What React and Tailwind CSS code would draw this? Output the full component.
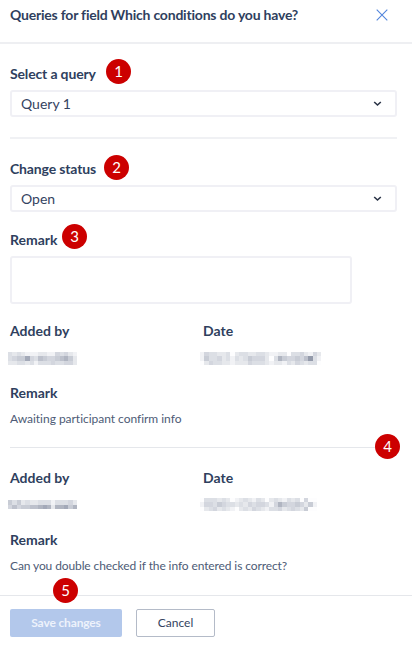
import React from "react";

// Shade levels of the redaction mosaic, 0 = white, 9 = darkest.
const NAME_ONE = ["3232111221143421", "3455843654456752", "2233231333433442"];
const DATE_ONE = [
  "1433223023322332112203342142",
  "1533423132354442037544546931",
  "0243322122243332122132432330",
];
const NAME_TWO = ["5352322333133342", "4645566787277857"];
const DATE_TWO = [
  "033323201232132023213230400",
  "144354332324344314754454251",
  "023423210232432133423432500",
];

const SHADES = ["#fdfdfe", "#f1f2f5", "#e6e8ec", "#dcdfe5", "#d3d6de", "#c8ccd5", "#bdc1cc", "#b0b5c1", "#a3a9b8", "#949bab"];

function Mosaic({ rows, className }) {
  return (
    <div className={`flex flex-col ${className}`}>
      {rows.map((row, i) => (
        <div key={i} className="flex flex-1">
          {row.split("").map((level, j) => (
            <span key={j} className="flex-1" style={{ backgroundColor: SHADES[Number(level)] }} />
          ))}
        </div>
      ))}
    </div>
  );
}

function Badge({ n, className }) {
  return (
    <span className={`absolute flex size-[25px] items-center justify-center rounded-full bg-[#cc0000] text-[15px] leading-none text-white ${className}`}>
      {n}
    </span>
  );
}

function Label({ children, className = "" }) {
  return <div className={`text-[14px] leading-5 font-bold text-[#2f3f5e] ${className}`}>{children}</div>;
}

function Select({ value }) {
  return (
    <div className="flex h-[27px] w-[387px] items-center justify-between rounded-[3px] border-2 border-[#f0f0f5] pr-[13px] pl-[9px] text-[14px] text-[#34435f]">
      <span>{value}</span>
      <svg width="9" height="6" viewBox="0 0 9 6" fill="none" stroke="#2b3447" strokeWidth="1.6">
        <path d="M1.2 1l3.3 3 3.3-3" />
      </svg>
    </div>
  );
}

function Entry({ name, nameClass, date, dateClass, remark, remarkClass }) {
  return (
    <div>
      <div className="flex h-[44px]">
        <div className="w-[193px]">
          <Label>Added by</Label>
          <Mosaic rows={name} className={nameClass} />
        </div>
        <div>
          <Label>Date</Label>
          <Mosaic rows={date} className={dateClass} />
        </div>
      </div>
      <div className="pt-[18px]"><Label>Remark</Label></div>
      <p className={`pt-[6px] text-[12px] leading-5 text-[#4d5b76] ${remarkClass}`}>{remark}</p>
    </div>
  );
}

export default function App() {
  return (
    <div className="flex h-[645px] w-[412px] flex-col overflow-hidden bg-white font-['Lato',sans-serif]">
      <header className="flex h-[44px] shrink-0 items-start justify-between border-b-2 border-[#eeeff2] pt-[5px] pr-[24px] pl-[10px]">
        <h1 className="text-[14px] leading-5 font-bold tracking-[-0.21px] text-[#2f3f5e]">Queries for field Which conditions do you have?</h1>
        <svg className="mt-[4px]" width="12" height="12" viewBox="0 0 12 12" fill="none" stroke="#5285dc" strokeWidth="1.1">
          <path d="M.7.7l10.6 10.6M11.3.7L.7 11.3" />
        </svg>
      </header>
      <main className="h-[551px] shrink-0 pr-[15px] pl-[10px]">
        <div className="relative pt-[20px]">
          <Label className="tracking-[-0.15px]">Select a query</Label>
          <Badge n="1" className="top-[15px] left-[96px]" />
        </div>
        <div className="pt-[6px]"><Select value="Query 1" /></div>
        <div className="mt-[20px] h-[2px] bg-[#f0f1f4]" />
        <div className="relative pt-[20px]">
          <Label className="tracking-[-0.15px]">Change status</Label>
          <Badge n="2" className="top-[16px] left-[94px]" />
        </div>
        <div className="pt-[6px]"><Select value="Open" /></div>
        <div className="relative pt-[18px]">
          <Label>Remark</Label>
          <Badge n="3" className="top-[12px] left-[52px]" />
        </div>
        <div className="mt-[6px] h-[48px] w-[342px] rounded-[3px] border-2 border-[#f0f0f5]" />
        <div className="pt-[17px]">
          <Entry
            name={NAME_ONE}
            nameClass="mt-[11px] -ml-[2px] h-[13px] w-[69px]"
            date={DATE_ONE}
            dateClass="mt-[11px] -ml-[3px] h-[13px] w-[121px]"
            remark="Awaiting participant confirm info"
            remarkClass="tracking-[-0.03px]"
          />
        </div>
        <div className="relative mt-[18px] h-px bg-[#e5e7eb]">
          <Badge n="4" className="-top-[13px] left-[365px]" />
        </div>
        <div className="pt-[20px]">
          <Entry
            name={NAME_TWO}
            nameClass="mt-[12px] -ml-[2px] h-[9px] w-[69px]"
            date={DATE_TWO}
            dateClass="mt-[10px] -ml-[3px] h-[13px] w-[117px]"
            remark="Can you double checked if the info entered is correct?"
            remarkClass="tracking-[-0.11px]"
          />
        </div>
      </main>
      <footer className="relative flex flex-1 gap-[14px] border-t border-[#e5e7eb] pt-[13px] pl-[10px] text-[12px]">
        <Badge n="5" className="-top-[18px] left-[53px]" />
        <button className="h-[28px] w-[112px] rounded-[2px] bg-[#b3c8eb] font-bold tracking-[-0.15px] text-[#edf2fb]">Save changes</button>
        <button className="h-[28px] w-[79px] rounded-[2px] border border-[#b4bbc8] text-[#34435f]">Cancel</button>
      </footer>
    </div>
  );
}
